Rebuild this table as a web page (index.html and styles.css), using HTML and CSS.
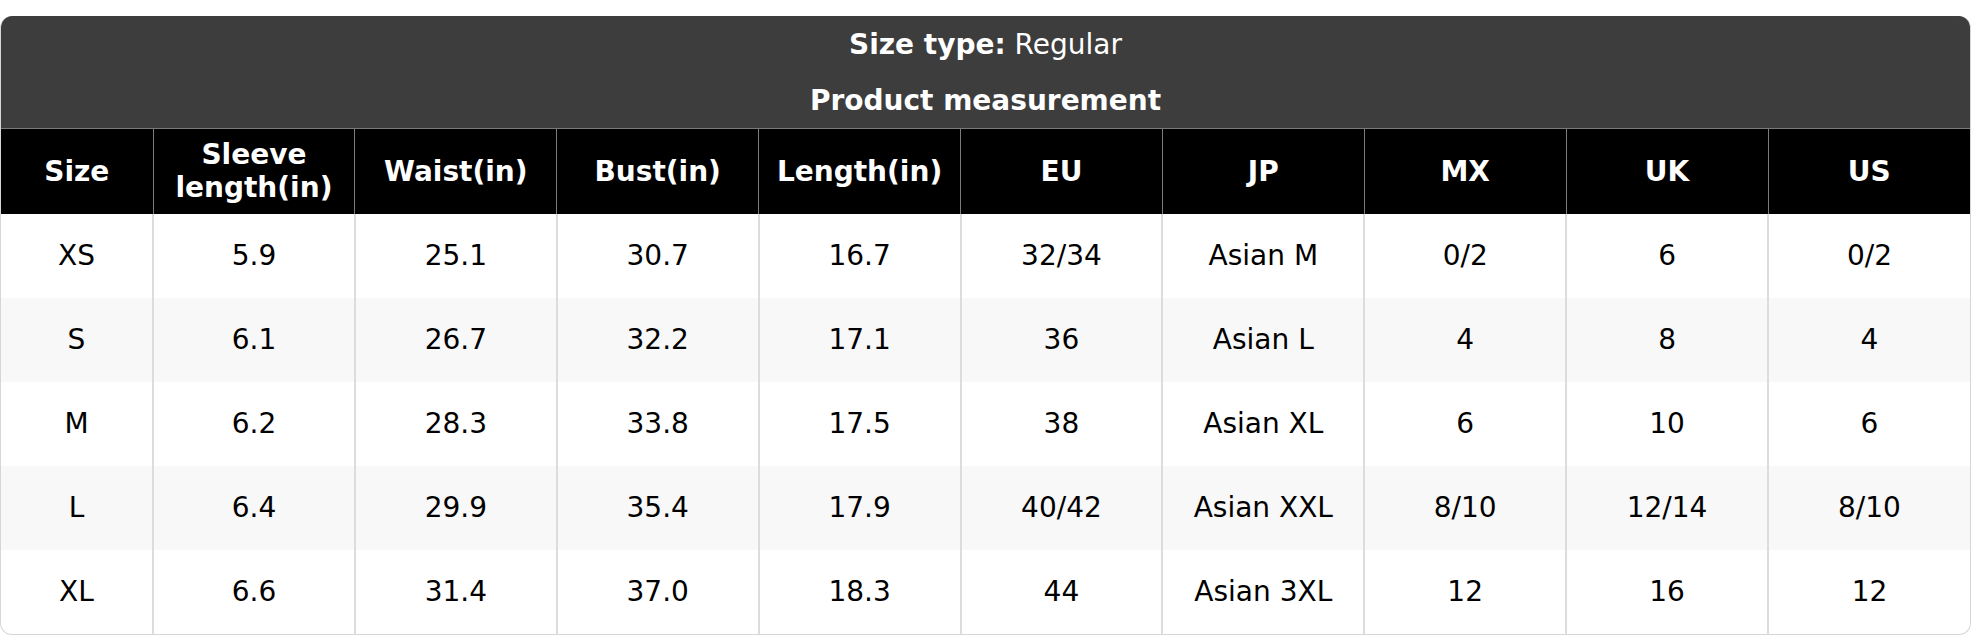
FILE: index.html
```html
<!DOCTYPE html>
<html lang="en">
<head>
<meta charset="utf-8">
<title>Size chart</title>
<link rel="stylesheet" href="styles.css">
</head>
<body>
<div class="chart">
  <div class="chart-head">
    <div class="head-line"><b>Size type:</b> Regular</div>
    <div class="head-line"><b>Product measurement</b></div>
  </div>
  <table class="size-table">
    <colgroup>
      <col class="col-first">
      <col><col><col><col><col><col><col><col><col>
    </colgroup>
    <thead>
      <tr>
        <th>Size</th><th>Sleeve<br>length(in)</th><th>Waist(in)</th><th>Bust(in)</th><th>Length(in)</th><th>EU</th><th>JP</th><th>MX</th><th>UK</th><th>US</th>
      </tr>
    </thead>
    <tbody>
      <tr><td>XS</td><td>5.9</td><td>25.1</td><td>30.7</td><td>16.7</td><td>32/34</td><td>Asian M</td><td>0/2</td><td>6</td><td>0/2</td></tr>
      <tr><td>S</td><td>6.1</td><td>26.7</td><td>32.2</td><td>17.1</td><td>36</td><td>Asian L</td><td>4</td><td>8</td><td>4</td></tr>
      <tr><td>M</td><td>6.2</td><td>28.3</td><td>33.8</td><td>17.5</td><td>38</td><td>Asian XL</td><td>6</td><td>10</td><td>6</td></tr>
      <tr><td>L</td><td>6.4</td><td>29.9</td><td>35.4</td><td>17.9</td><td>40/42</td><td>Asian XXL</td><td>8/10</td><td>12/14</td><td>8/10</td></tr>
      <tr><td>XL</td><td>6.6</td><td>31.4</td><td>37.0</td><td>18.3</td><td>44</td><td>Asian 3XL</td><td>12</td><td>16</td><td>12</td></tr>
    </tbody>
  </table>
</div>
</body>
</html>
```
FILE: styles.css
```css
html, body {
  margin: 0;
  padding: 0;
  background: #fff;
}
body {
  padding-top: 16px;
  font-family: "DejaVu Sans", Verdana, sans-serif;
  font-size: 28px;
  color: #000;
}
.chart {
  width: 1971px;
  box-sizing: border-box;
  border: 1px solid #d6d6d6;
  border-top: none;
  border-radius: 12px;
  overflow: hidden;
}
.chart-head {
  background: #3d3d3d;
  color: #fff;
  display: flex;
  flex-direction: column;
}
.head-line {
  height: 56px;
  display: flex;
  align-items: center;
  justify-content: center;
  white-space: pre;
}
.head-line b {
  font-weight: bold;
}
.size-table {
  width: 100%;
  border-collapse: collapse;
  table-layout: fixed;
}
.col-first {
  width: 152px;
}
.size-table th {
  background: #000;
  color: #fff;
  font-weight: bold;
  height: 85px;
  padding: 0 4px;
  line-height: 33px;
  border-top: 1px solid #7a7a7a;
  border-left: 1px solid #7a7a7a;
  text-align: center;
  box-sizing: border-box;
}
.size-table th:first-child {
  border-left: none;
}
.size-table td {
  height: 84px;
  padding: 0;
  text-align: center;
  border-left: 2px solid #dcdcdc;
  box-sizing: border-box;
}
.size-table td:first-child {
  border-left: none;
}
.size-table tbody tr:nth-child(even) td {
  background: #f8f8f8;
}
```
